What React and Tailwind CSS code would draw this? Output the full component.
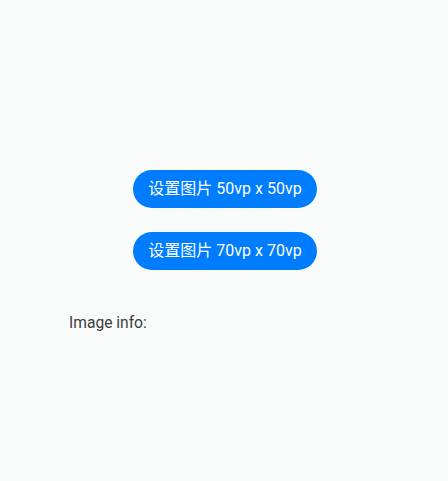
export default function App() {
  return (
    <div
      className="min-h-[481px] bg-[#f9fafa] flex flex-col items-center pt-[170px]"
      style={{ fontFamily: 'Roboto, "Noto Sans CJK SC", sans-serif' }}
    >
      <button className="ml-[2px] h-[38px] w-[184px] rounded-full bg-[#007dff] text-white text-[16px] leading-none">
        设置图片 50vp x 50vp
      </button>
      <button className="ml-[2px] mt-[24px] h-[38px] w-[184px] rounded-full bg-[#007dff] text-white text-[16px] leading-none">
        设置图片 70vp x 70vp
      </button>
      <div className="self-stretch px-[69px] mt-[42px]">
        <p className="text-[15.6px] leading-[22px] text-[#3d3d3d]">Image info:</p>
      </div>
    </div>
  );
}
